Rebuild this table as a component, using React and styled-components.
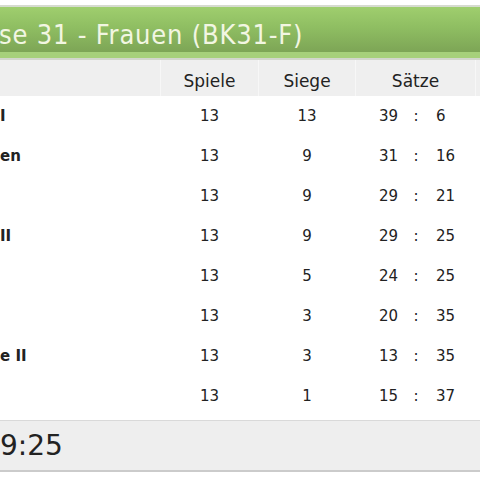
import styled, { createGlobalStyle } from 'styled-components';

const GlobalStyle = createGlobalStyle`
  html, body {
    margin: 0;
    padding: 0;
    background: #ffffff;
  }
  body {
    font-family: "DejaVu Sans", Verdana, sans-serif;
    color: #222;
  }
`;

const rows = [
  { name: 'I', spiele: 13, siege: 13, won: 39, lost: 6 },
  { name: 'en', spiele: 13, siege: 9, won: 31, lost: 16 },
  { name: '', spiele: 13, siege: 9, won: 29, lost: 21 },
  { name: 'II', spiele: 13, siege: 9, won: 29, lost: 25 },
  { name: '', spiele: 13, siege: 5, won: 24, lost: 25 },
  { name: '', spiele: 13, siege: 3, won: 20, lost: 35 },
  { name: 'e II', spiele: 13, siege: 3, won: 13, lost: 35 },
  { name: '', spiele: 13, siege: 1, won: 15, lost: 37 },
];

export default function App() {
  return (
    <>
      <GlobalStyle />
      <Page>
        <TitleBar>
          <Title>se 31 - Frauen (BK31-F)</Title>
        </TitleBar>
        <HeadRow>
          <HeadCell />
          <HeadCell $divider>Spiele</HeadCell>
          <HeadCell $divider>Siege</HeadCell>
          <HeadCell $divider>Sätze</HeadCell>
          <HeadCell $divider />
        </HeadRow>
        {rows.map((row, index) => (
          <Row key={index}>
            <TeamName>{row.name}</TeamName>
            <NumCell>{row.spiele}</NumCell>
            <NumCell>{row.siege}</NumCell>
            <SetsCell>
              <SetLeft>{row.won}</SetLeft>
              <SetColon>:</SetColon>
              <SetRight>{row.lost}</SetRight>
            </SetsCell>
            <span />
          </Row>
        ))}
        <Footer>
          <FooterText>9:25</FooterText>
        </Footer>
      </Page>
    </>
  );
}

const Page = styled.div`
  width: 480px;
  height: 480px;
  overflow: hidden;
  padding-top: 5px;
  box-sizing: border-box;
`;

const TitleBar = styled.div`
  height: 45px;
  display: flex;
  align-items: center;
  border-top: 2px solid #d6dbd0;
  border-bottom: 6px solid #a6d07a;
  box-shadow: 0 2px 0 #d2d6cc;
  background: linear-gradient(to bottom, #9fce6e 0%, #8fbe62 45%, #7da556 100%);
`;

const Title = styled.h1`
  margin: 0 0 0 -1px;
  padding-top: 9px;
  font-family: "DejaVu Sans Condensed", "DejaVu Sans", sans-serif;
  font-stretch: condensed;
  font-weight: normal;
  font-size: 27px;
  letter-spacing: 0.8px;
  color: #f2f6e2;
  white-space: nowrap;
`;

const HeadRow = styled.div`
  margin-top: 2px;
  height: 36px;
  display: grid;
  grid-template-columns: 160px 98px 97px 120px 1fr;
  background: #efefef;
`;

const HeadCell = styled.div`
  display: flex;
  align-items: center;
  justify-content: center;
  font-size: 17px;
  color: #222;
  padding-top: 6px;
  border-left: ${p => (p.$divider ? '1px solid #f7f7f7' : 'none')};
`;

const Row = styled.div`
  height: 40px;
  display: grid;
  grid-template-columns: 160px 98px 97px 120px 1fr;
  align-items: center;
  background: #ffffff;
  font-size: 15px;
  color: #222;
`;

const TeamName = styled.div`
  font-weight: bold;
  white-space: nowrap;
  overflow: hidden;
`;

const NumCell = styled.div`
  text-align: center;
  padding-left: 1px;
`;

const SetsCell = styled.div`
  display: grid;
  grid-template-columns: 43px 36px 1fr;
`;

const SetLeft = styled.span`
  text-align: right;
`;

const SetColon = styled.span`
  text-align: center;
`;

const SetRight = styled.span`
  padding-left: 2px;
`;

const Footer = styled.div`
  margin-top: 4px;
  height: 49px;
  display: flex;
  align-items: center;
  background: #eeeeee;
  border-top: 1px solid #d9d9d9;
  border-bottom: 2px solid #cbcbcb;
`;

const FooterText = styled.div`
  font-size: 28px;
  color: #222;
`;
